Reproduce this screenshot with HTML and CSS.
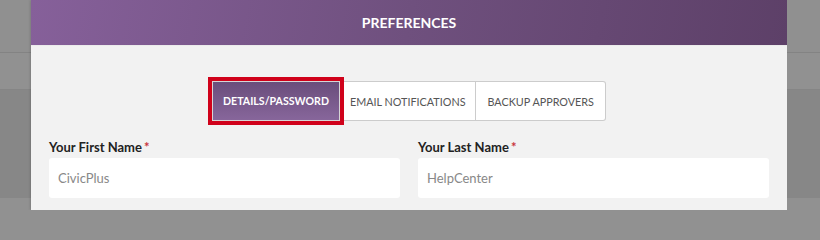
FILE: index.html
```html
<!DOCTYPE html>
<html>
<head>
<meta charset="utf-8">
<link rel="stylesheet" href="styles.css">
</head>
<body>
<div class="backdrop">
  <div class="side side-left">
    <div class="band band-a"></div>
    <div class="band band-b"></div>
    <div class="band band-c"></div>
    <div class="band band-d"></div>
  </div>
  <div class="modal">
    <div class="modal-header">PREFERENCES</div>
    <div class="modal-body">
      <div class="tabs">
        <button class="tab tab-active">DETAILS/PASSWORD</button>
        <button class="tab">EMAIL NOTIFICATIONS</button>
        <button class="tab tab-last">BACKUP APPROVERS</button>
      </div>
      <div class="fields">
        <div class="field">
          <label class="field-label">Your First Name <span class="req">*</span></label>
          <div class="input">CivicPlus</div>
        </div>
        <div class="field">
          <label class="field-label">Your Last Name <span class="req">*</span></label>
          <div class="input">HelpCenter</div>
        </div>
      </div>
    </div>
  </div>
  <div class="side side-right">
    <div class="band band-a"></div>
    <div class="band band-b"></div>
    <div class="band band-c"></div>
    <div class="band band-d"></div>
  </div>
</div>
</body>
</html>
```

FILE: styles.css
```css
* { box-sizing: border-box; }
html, body {
  margin: 0;
  padding: 0;
  width: 820px;
  height: 210px;
  overflow: hidden;
  background: #919191;
  font-family: Lato, "Liberation Sans", sans-serif;
}
.backdrop {
  display: flex;
  height: 210px;
  background: #8c8c8c;
}
.side {
  display: flex;
  flex-direction: column;
}
.side-left { width: 31px; }
.side-right { width: 33px; }
.band { width: 100%; }
.band-a { height: 53px; background: #909090; border-bottom: 1px solid #838383; }
.band-b { height: 37px; background: #919191; border-bottom: 1px solid #858585; }
.band-c { height: 108px; background: #878787; }
.band-d { flex: 1; background: #919191; }
.modal {
  width: 756px;
  display: flex;
  flex-direction: column;
  background: #f2f2f2;
  box-shadow: 0 0 3px rgba(0,0,0,0.25);
}
.modal-header {
  height: 45px;
  display: flex;
  align-items: center;
  justify-content: center;
  color: #fff;
  font-weight: 700;
  font-size: 14px;
  background: linear-gradient(100deg, #86609a 0%, #6f507e 50%, #5d4068 100%);
}
.modal-body {
  flex: 1;
  padding: 35px 18px 0;
  border-top: 1px solid #ebebeb;
}
.tabs {
  display: flex;
  justify-content: center;
}
.tab {
  height: 40px;
  padding: 0 9.5px;
  font-family: Lato, "Liberation Sans", sans-serif;
  font-size: 10.8px;
  color: #555;
  background: #fff;
  border: 1px solid #ccc;
  border-left: none;
  margin: 0;
}
.tab-last { border-radius: 0 3px 3px 0; padding: 0 11.5px; }
.tab-active {
  border: 1px solid #d6d6d6;
  color: #fff;
  font-weight: 700;
  font-size: 10.6px;
  padding: 0 10.5px;
  background: linear-gradient(180deg, #6a4d7b 0%, #87669b 100%);
  outline: 4px solid #d0021b;
  outline-offset: 0;
  position: relative;
  z-index: 1;
}
.fields {
  display: grid;
  grid-template-columns: 1fr 1fr;
  column-gap: 18px;
  margin-top: 18px;
}
.field { display: flex; flex-direction: column; }
.field-label {
  font-size: 13px;
  font-weight: 700;
  color: #222;
  line-height: 17px;
  margin-bottom: 2px;
}
.req { color: #c9343b; margin-left: -1px; }
.input {
  height: 40px;
  background: #fff;
  border-radius: 3px;
  padding: 0 9px;
  display: flex;
  align-items: center;
  font-size: 13px;
  color: #888;
}
```
